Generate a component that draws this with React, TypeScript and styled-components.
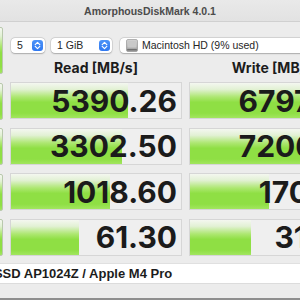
import styled, { createGlobalStyle } from "styled-components";

const GlobalStyle = createGlobalStyle`
  html, body {
    margin: 0;
    padding: 0;
    width: 300px;
    height: 300px;
    overflow: hidden;
    background: #ececec;
  }
`;

const results = [
  { read: 5390.26, write: 6797.86 },
  { read: 3302.5, write: 7206.41 },
  { read: 1018.6, write: 170.92 },
  { read: 61.3, write: 31.54 },
];

const tests = ["SEQ1M Q8T1", "SEQ128K Q32T1", "RND4K Q32T16", "RND4K Q1T1"];

// log scale bar, same as the app
const barPercent = (v: number) => Math.min(100, 13.8 + 14.7 * Math.log10(v));

const greenFill = `linear-gradient(
  to bottom,
  #f4f7f0 0%,
  #e2f1d4 18%,
  #ade771 40%,
  #8fdf44 55%,
  #8fdf44 86%,
  #a2e65f 100%
)`;

const Window = styled.div`
  width: 300px;
  height: 300px;
  display: flex;
  flex-direction: column;
  overflow: hidden;
  box-sizing: border-box;
  border-bottom: 2px solid #8e8e8e;
`;

const TitleBar = styled.div`
  height: 22px;
  flex-shrink: 0;
  box-sizing: border-box;
  display: flex;
  align-items: center;
  justify-content: center;
  background: linear-gradient(to bottom, #e9e9e9, #e2e2e2);
  border-bottom: 1px solid #d0d0d0;
  font: bold 10.5px "Liberation Sans", Arial, sans-serif;
  color: #4b4b4b;
`;

const Content = styled.div`
  margin-left: -57px;
  padding-top: 5px;
  display: flex;
  flex-direction: column;
`;

const Board = styled.div`
  display: flex;
  gap: 7px;
`;

const SideColumn = styled.div`
  width: 60px;
  flex-shrink: 0;
  display: flex;
  flex-direction: column;
  gap: 8.5px;
`;

// only the right edge of these buttons is inside the picture
const TestButton = styled.button<{ $tall?: boolean }>`
  height: ${(p) => (p.$tall ? 47 : 37)}px;
  padding: 0;
  border: 1px solid #b9c9ad;
  border-radius: 2px;
  background: ${greenFill};
`;

const MainColumn = styled.div`
  width: 351px;
  flex-shrink: 0;
  display: flex;
  flex-direction: column;
`;

const Toolbar = styled.div`
  height: 29px;
  box-sizing: border-box;
  padding: 10.5px 0 0 1px;
  display: flex;
  align-items: flex-start;
  gap: 6px;
`;

const Popup = styled.div<{ $width: number; $offset?: number }>`
  width: ${(p) => p.$width}px;
  height: 15px;
  margin-left: ${(p) => p.$offset ?? 0}px;
  flex-shrink: 0;
  box-sizing: border-box;
  padding: 0 2px 0 6px;
  display: flex;
  align-items: center;
  gap: 4px;
  background: #fff;
  border-radius: 4px;
  box-shadow: 0 0 0 0.5px rgba(0, 0, 0, 0.14), 0 0.5px 1.5px rgba(0, 0, 0, 0.22);
  font: 10.5px "Liberation Sans", Arial, sans-serif;
  color: #262626;
`;

const PopupLabel = styled.span`
  flex: 1;
  white-space: nowrap;
  line-height: 15px;
`;

const Stepper = styled.span`
  width: 11px;
  height: 11px;
  border-radius: 3px;
  background: linear-gradient(to bottom, #4c93f8, #2f78f0);
  display: flex;
  align-items: center;
  justify-content: center;
`;

const HeaderRow = styled.div`
  height: 26px;
  box-sizing: border-box;
  padding-top: 4px;
  display: grid;
  grid-template-columns: 172px 172px;
  column-gap: 7px;
`;

const ColumnTitle = styled.div`
  text-align: center;
  font: bold 14px/16px Inter, "Liberation Sans", sans-serif;
  color: #1c1c1c;
`;

const Rows = styled.div`
  display: flex;
  flex-direction: column;
  gap: 8.5px;
`;

const ResultRow = styled.div`
  display: grid;
  grid-template-columns: 172px 172px;
  column-gap: 7px;
`;

const Cell = styled.div`
  position: relative;
  height: 37px;
  box-sizing: border-box;
  border: 1px solid #d6d6d6;
  background: #efefef;
  overflow: hidden;
`;

const Bar = styled.div`
  position: absolute;
  left: 0;
  top: 0;
  bottom: 0;
  background: ${greenFill};
`;

const Value = styled.div`
  position: relative;
  height: 100%;
  padding-right: 4px;
  display: flex;
  align-items: center;
  justify-content: flex-end;
  font: bold 30px Inter, "Liberation Sans", sans-serif;
  color: #1b1b1b;
`;

const CommentBar = styled.div`
  margin-top: 6.5px;
  width: 420px;
  height: 21px;
  box-sizing: border-box;
  padding-left: 4px;
  display: flex;
  align-items: center;
  background: #fff;
  border-top: 1px solid #e0e0e0;
  border-bottom: 1px solid #dcdcdc;
  font: bold 13px "Liberation Sans", Arial, sans-serif;
  color: #1c1c1c;
`;

const StepperIcon = () => (
  <svg width="11" height="11" viewBox="0 0 11 11">
    <path
      d="M3.2 4.6 L5.5 2.4 L7.8 4.6 M3.2 6.4 L5.5 8.6 L7.8 6.4"
      fill="none"
      stroke="#fff"
      strokeWidth="1.2"
      strokeLinecap="round"
      strokeLinejoin="round"
    />
  </svg>
);

const DriveIcon = () => (
  <svg width="12" height="13" viewBox="0 0 12 13">
    <defs>
      <linearGradient id="drive" x1="0" y1="0" x2="0" y2="1">
        <stop offset="0" stopColor="#d9d9d9" />
        <stop offset="1" stopColor="#9b9b9b" />
      </linearGradient>
    </defs>
    <rect x="0.5" y="0.5" width="11" height="12" rx="1.5" fill="url(#drive)" stroke="#8a8a8a" strokeWidth="0.6" />
    <rect x="1.6" y="1.6" width="8.8" height="7" rx="0.8" fill="#c9c9c9" />
    <rect x="1.2" y="10" width="9.6" height="1.4" fill="#707070" />
  </svg>
);

const Result = ({ value }: { value: number }) => (
  <Cell>
    <Bar style={{ width: `${barPercent(value)}%` }} />
    <Value>{value.toFixed(2)}</Value>
  </Cell>
);

const App = () => {
  return (
    <>
      <GlobalStyle />
      <Window>
        <TitleBar>AmorphousDiskMark 4.0.1</TitleBar>
        <Content>
          <Board>
            <SideColumn>
              <TestButton $tall aria-label="All" />
              {tests.map((t) => (
                <TestButton key={t} aria-label={t} />
              ))}
            </SideColumn>
            <MainColumn>
              <Toolbar>
                <Popup $width={34}>
                  <PopupLabel>5</PopupLabel>
                  <Stepper>
                    <StepperIcon />
                  </Stepper>
                </Popup>
                <Popup $width={61}>
                  <PopupLabel>1 GiB</PopupLabel>
                  <Stepper>
                    <StepperIcon />
                  </Stepper>
                </Popup>
                <Popup $width={230} $offset={2}>
                  <DriveIcon />
                  <PopupLabel>Macintosh HD (9% used)</PopupLabel>
                  <Stepper>
                    <StepperIcon />
                  </Stepper>
                </Popup>
              </Toolbar>
              <HeaderRow>
                <ColumnTitle>Read [MB/s]</ColumnTitle>
                <ColumnTitle>Write [MB/s]</ColumnTitle>
              </HeaderRow>
              <Rows>
                {results.map((r) => (
                  <ResultRow key={r.read}>
                    <Result value={r.read} />
                    <Result value={r.write} />
                  </ResultRow>
                ))}
              </Rows>
            </MainColumn>
          </Board>
          <CommentBar>APPLE SSD AP1024Z / Apple M4 Pro</CommentBar>
        </Content>
      </Window>
    </>
  );
};

export default App;
